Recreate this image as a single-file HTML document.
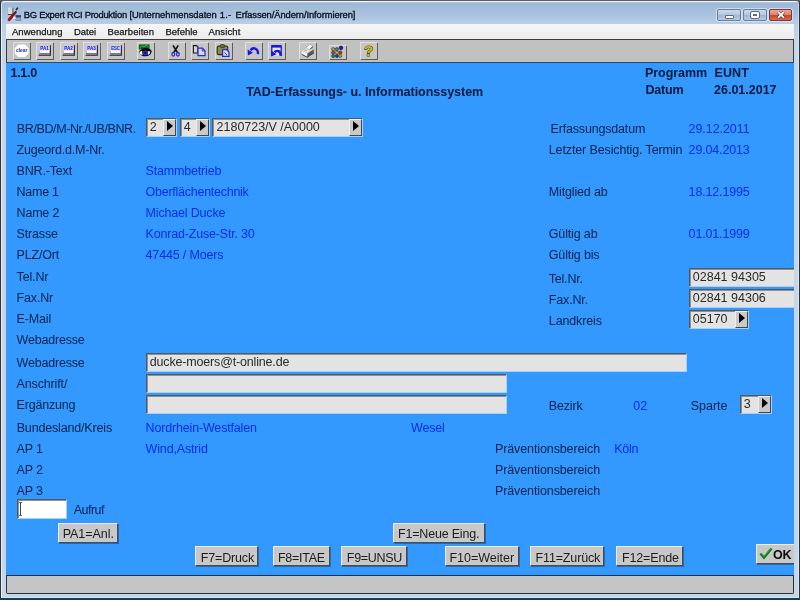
<!DOCTYPE html>
<html><head><meta charset="utf-8"><title>BG Expert RCI Produktion</title>
<style>
html,body{margin:0;padding:0;}
body{width:800px;height:600px;overflow:hidden;position:relative;background:linear-gradient(#555a60 0,#555a60 300px,#0e4450 590px);font-family:"Liberation Sans",sans-serif;}
.t{position:absolute;white-space:nowrap;line-height:normal;}
#frame{position:absolute;left:0;top:0;width:798px;height:597px;border:1px solid #2e3236;border-top-color:#5a5e62;border-bottom-color:#0e4450;border-radius:4px 4px 0 0;box-shadow:inset 1px 1px 0 rgba(255,255,255,.65),inset -1px -1px 0 rgba(255,255,255,.35);background:linear-gradient(#e8f0fa 0,#9db8d8 2px,#a7c0de 12px,#b9cee8 23px,#c4d6ec 40px,#c4d6ec 100%);overflow:hidden;}
#menubar{position:absolute;left:6px;top:24px;width:788px;height:15px;background:linear-gradient(#f6f6f6,#ececec);}
#toolbar{will-change:transform;position:absolute;left:6px;top:39px;width:786px;height:22px;background:#c1c1c1;border:1px solid #3c3c3c;border-bottom-color:#2a4a6a;}
.tb{position:absolute;top:2px;width:17px;height:17px;box-sizing:border-box;margin-left:-7px;background:#c6c6c6;box-shadow:inset 1px 1px 0 #dedede,1px 1px 0 #5e5e5e;}
.tb.s{box-shadow:none;background:none}
.tb.s:before{content:'';position:absolute;left:0;top:2.5px;right:0;bottom:0;background:#c6c6c6;box-shadow:inset 1px 1px 0 #dedede,1px 1px 0 #5e5e5e;}
.tb svg{position:absolute;left:0;top:0;overflow:visible;filter:blur(.4px);}
#main{position:absolute;left:6px;top:63px;width:788px;height:512px;background:#3399ff;overflow:hidden;}
#main>div{position:absolute;left:-6px;top:-63px;width:800px;height:600px;will-change:transform;filter:blur(.45px);}
#top{position:absolute;left:0;top:0;width:800px;height:600px;will-change:transform;filter:blur(.4px);}
#status{position:absolute;left:6px;top:575px;width:786px;height:17px;background:#c5c5c5;border:1px solid #2a3036;border-top-color:#14305c;border-radius:0 0 2px 2px;}
.f.w{background:#fff;}
.f{position:absolute;box-sizing:border-box;background:#e3e3e3;border-top:1px solid #525860;border-left:1px solid #525860;border-right:1px solid #a6d0ff;border-bottom:1px solid #a6d0ff;box-shadow:inset 1px 1px 0 #8e9094;}
.ab{position:absolute;right:0;top:0;bottom:0;width:13px;background:#c9c9c9;border-right:1px solid #444;border-bottom:1px solid #444;border-left:1px solid #eee;border-top:1px solid #eee;box-sizing:border-box;}
.ab i{position:absolute;left:3px;top:1px;width:0;height:0;border-left:6.5px solid #000;border-top:5.5px solid transparent;border-bottom:5.5px solid transparent;}
.b{position:absolute;box-sizing:border-box;background:#c8c8c8;border-top:1px solid #ececec;border-left:1px solid #ececec;border-right:1px solid #4c4c4c;border-bottom:1px solid #4c4c4c;box-shadow:1px 1px 0 rgba(24,56,110,.5);}
.wb{position:absolute;top:9px;height:12px;box-sizing:border-box;border:1px solid #6d7f98;border-radius:2px;box-shadow:0 0 0 1px rgba(255,255,255,.45);}
</style></head>
<body>
<div id="frame"></div>
<!--CHROME-->
<div id="menubar"></div>
<div id="toolbar">
<div class="tb" style="left:13px"><svg width="18" height="18" viewBox="0 0 18 18"><polygon points="5.4,2.4 12,2.4 15.6,6 15.6,11.4 12,15 5.4,15 1.8,11.4 1.8,6" fill="#fff"/>
<text x="8.7" y="10.4" font-size="5.4" font-weight="bold" fill="#1c1ce8" text-anchor="middle" textLength="11.6" lengthAdjust="spacingAndGlyphs">clear</text></svg></div>
<div class="tb" style="left:36.2px"><svg width="18" height="18" viewBox="0 0 18 18"><rect x="2.2" y="2.9" width="12.4" height="10.6" fill="#9c9c9c"/>
<path d="M2.2 13.5 L2.2 2.9 L14.6 2.9" fill="none" stroke="#d6d6d6" stroke-width="1"/>
<path d="M2.6 13.3 L14.4 13.3 L14.4 3.2" fill="none" stroke="#2c2c2c" stroke-width="1.1"/>
<rect x="3.6" y="3.6" width="9.8" height="7.3" fill="#fff"/>
<rect x="3.6" y="3.6" width="9.8" height="4.9" fill="#d0d0fa"/>
<path d="M3.6 10.9 L13.4 10.9 L14 12.6 L3 12.6Z" fill="#7c7c7c"/>
<text x="8.5" y="8.3" font-size="5.4" font-weight="bold" fill="#1414e0" text-anchor="middle" textLength="8.6" lengthAdjust="spacingAndGlyphs">PA1</text></svg></div>
<div class="tb" style="left:59.6px"><svg width="18" height="18" viewBox="0 0 18 18"><rect x="2.2" y="2.9" width="12.4" height="10.6" fill="#9c9c9c"/>
<path d="M2.2 13.5 L2.2 2.9 L14.6 2.9" fill="none" stroke="#d6d6d6" stroke-width="1"/>
<path d="M2.6 13.3 L14.4 13.3 L14.4 3.2" fill="none" stroke="#2c2c2c" stroke-width="1.1"/>
<rect x="3.6" y="3.6" width="9.8" height="7.3" fill="#fff"/>
<rect x="3.6" y="3.6" width="9.8" height="4.9" fill="#d0d0fa"/>
<path d="M3.6 10.9 L13.4 10.9 L14 12.6 L3 12.6Z" fill="#7c7c7c"/>
<text x="8.5" y="8.3" font-size="5.4" font-weight="bold" fill="#1414e0" text-anchor="middle" textLength="8.6" lengthAdjust="spacingAndGlyphs">PA2</text></svg></div>
<div class="tb" style="left:83px"><svg width="18" height="18" viewBox="0 0 18 18"><rect x="2.2" y="2.9" width="12.4" height="10.6" fill="#9c9c9c"/>
<path d="M2.2 13.5 L2.2 2.9 L14.6 2.9" fill="none" stroke="#d6d6d6" stroke-width="1"/>
<path d="M2.6 13.3 L14.4 13.3 L14.4 3.2" fill="none" stroke="#2c2c2c" stroke-width="1.1"/>
<rect x="3.6" y="3.6" width="9.8" height="7.3" fill="#fff"/>
<rect x="3.6" y="3.6" width="9.8" height="4.9" fill="#d0d0fa"/>
<path d="M3.6 10.9 L13.4 10.9 L14 12.6 L3 12.6Z" fill="#7c7c7c"/>
<text x="8.5" y="8.3" font-size="5.4" font-weight="bold" fill="#1414e0" text-anchor="middle" textLength="8.6" lengthAdjust="spacingAndGlyphs">PA3</text></svg></div>
<div class="tb" style="left:106.5px"><svg width="18" height="18" viewBox="0 0 18 18"><rect x="2.2" y="2.9" width="12.4" height="10.6" fill="#9c9c9c"/>
<path d="M2.2 13.5 L2.2 2.9 L14.6 2.9" fill="none" stroke="#d6d6d6" stroke-width="1"/>
<path d="M2.6 13.3 L14.4 13.3 L14.4 3.2" fill="none" stroke="#2c2c2c" stroke-width="1.1"/>
<rect x="3.6" y="3.6" width="9.8" height="7.3" fill="#fff"/>
<rect x="3.6" y="3.6" width="9.8" height="4.9" fill="#d0d0fa"/>
<path d="M3.6 10.9 L13.4 10.9 L14 12.6 L3 12.6Z" fill="#7c7c7c"/>
<text x="8.5" y="8.3" font-size="5.4" font-weight="bold" fill="#1414e0" text-anchor="middle" textLength="8.6" lengthAdjust="spacingAndGlyphs">ESC</text></svg></div>
<div class="tb" style="left:137.3px"><svg width="18" height="18" viewBox="0 0 18 18"><rect x="1.8" y="2.4" width="10.8" height="5" fill="#0c6a1c"/>
<path d="M3.2 5.4 L5 3.8 L7 4.8 L9 3.4 L11.4 4.6" stroke="#58b468" stroke-width=".8" fill="none"/>
<path d="M1.8 10.6 Q4 5.6 9 6 Q13.6 6.2 14.8 9.6 L13.4 12.4 Q9 15.6 4.6 13.4Z" fill="#08080c"/>
<path d="M2.2 10.8 Q3.2 9.2 5 8.8 L5.6 13.2 Q3.4 12.4 2.2 10.8Z" fill="#fff"/>
<path d="M10.6 9 L13.4 9.6 L12.6 12 L10.6 13Z" fill="#e8e8f0"/>
<ellipse cx="8.2" cy="10.9" rx="2.7" ry="2.4" fill="#2030d8"/><circle cx="8.2" cy="10.9" r=".9" fill="#000050"/></svg></div>
<div class="tb" style="left:167.8px"><svg width="18" height="18" viewBox="0 0 18 18"><path d="M5 3.4 L9.2 10.2 M10.2 3.4 L6 10.2" stroke="#14141c" stroke-width="1.7" fill="none"/>
<ellipse cx="5.3" cy="12.3" rx="1.4" ry="1.8" fill="none" stroke="#3a30c8" stroke-width="1.3"/>
<ellipse cx="9.9" cy="12.3" rx="1.4" ry="1.8" fill="none" stroke="#3a30c8" stroke-width="1.3"/></svg></div>
<div class="tb" style="left:190.8px"><svg width="18" height="18" viewBox="0 0 18 18"><path d="M2.4 3.6H5.6L6.8 4.8V11H2.4Z" fill="#d4d4d4" stroke="#1c1c1c" stroke-width="1.1"/>
<path d="M7 6.2H11.4L14 8.8V13.6H7Z" fill="#d8d8f0" stroke="#2a2ad0" stroke-width="1.2"/>
<path d="M11.2 6.4V9H13.8" fill="none" stroke="#2a2ad0" stroke-width=".9"/></svg></div>
<div class="tb" style="left:214.5px"><svg width="18" height="18" viewBox="0 0 18 18"><rect x="2.2" y="4" width="10.6" height="8.6" rx="1.4" fill="#8c8c48" stroke="#2c2c14" stroke-width="1.1"/>
<rect x="5.4" y="2.6" width="4.2" height="2.8" rx=".8" fill="#74743a" stroke="#2c2c14" stroke-width=".8"/>
<path d="M7.6 7.6H11.6L14 10V14.4H7.6Z" fill="#d8d8f4" stroke="#2a2ad0" stroke-width="1.2"/>
<path d="M9.4 10.4 L12 13" stroke="#2a2ad0" stroke-width=".9"/></svg></div>
<div class="tb" style="left:245.3px"><svg width="18" height="18" viewBox="0 0 18 18"><path d="M13 12.2 C13.4 6.4 8.6 4.6 5.4 8.2" fill="none" stroke="#1818dc" stroke-width="2.3"/>
<path d="M2.6 7.4 L2.9 13.4 L8 10.8Z" fill="#1818dc"/></svg></div>
<div class="tb" style="left:268.3px"><svg width="18" height="18" viewBox="0 0 18 18"><rect x="3.2" y="3" width="10.6" height="10.6" fill="#e6e6f2"/>
<rect x="3.2" y="3" width="10.6" height="2.6" fill="#1818dc"/>
<path d="M3.8 5 V14 M13.2 5 V14" stroke="#1818dc" stroke-width="1.3"/>
<path d="M12.6 13.8 C12.8 8.8 8.8 7.8 6.4 10.2" fill="none" stroke="#1818dc" stroke-width="2.5"/>
<path d="M3 8.4 L3.2 14.6 L8.6 12.2Z" fill="#1818dc"/></svg></div>
<div class="tb" style="left:298.8px"><svg width="18" height="18" viewBox="0 0 18 18"><polygon points="2.6,8.8 8.2,4.4 14.6,7.6 8.4,11.6" fill="#e2e2e2" stroke="#9a9a9a" stroke-width=".5"/>
<polygon points="2.6,8.8 8.4,11.6 8.2,15 3,12.6" fill="#f4f4f4"/>
<polygon points="8.4,11.6 14.6,7.6 14.8,10.8 8.2,15" fill="#585858"/>
<path d="M2.8 12.4 L8.2 15.2 L15 10.8" fill="none" stroke="#2e2e2e" stroke-width=".9"/>
<polygon points="7.4,5.8 10.6,2.4 14,4.3 10.6,7.6" fill="#fff" stroke="#8a8a8a" stroke-width=".45"/>
<path d="M10.8 7.4 L14 4.6" stroke="#3a3a3a" stroke-width=".9"/>
<path d="M5.4 7.6 L8 9" stroke="#a8b09c" stroke-width="1.2"/></svg></div>
<div class="tb s" style="left:329.3px"><svg width="18" height="18" viewBox="0 0 18 18">
<circle cx="4.2" cy="7.2" r="1.65" stroke="#2c2c34" stroke-width=".55" fill="#b4a418"/><circle cx="7.9" cy="7.2" r="1.65" stroke="#2c2c34" stroke-width=".55" fill="#2a868c"/><circle cx="12" cy="5.8" r="1.85" stroke="#101030" stroke-width=".55" fill="#1414a8"/>
<circle cx="4.2" cy="10.6" r="1.65" stroke="#2c2c34" stroke-width=".55" fill="#ac2c9c"/><circle cx="7.9" cy="10.6" r="1.65" stroke="#2c2c34" stroke-width=".55" fill="#c4b42c"/><circle cx="11.4" cy="10.4" r="1.65" stroke="#2c2c34" stroke-width=".55" fill="#cc281c"/>
<circle cx="4.2" cy="14" r="1.65" stroke="#2c2c34" stroke-width=".55" fill="#149028"/><circle cx="7.9" cy="14" r="1.65" stroke="#2c2c34" stroke-width=".55" fill="#1c34cc"/><circle cx="11.2" cy="13.8" r="1.65" stroke="#2c2c34" stroke-width=".55" fill="#b4a418"/></svg></div>
<div class="tb" style="left:359.7px"><svg width="18" height="18" viewBox="0 0 18 18"><text x="8.8" y="14.4" font-size="15.5" font-weight="bold" fill="#c8bc1e" stroke="#4c4a12" stroke-width="1.1" text-anchor="middle" paint-order="stroke">?</text></svg></div>
</div>
<div id="main"><div>
<div class="t" style="left:16.80px;top:122.00px;font-size:12.5px;color:#06224e;letter-spacing:-0.390px;">BR/BD/M-Nr./UB/BNR.</div>
<div class="t" style="left:16.60px;top:143.00px;font-size:12.5px;color:#06224e;letter-spacing:-0.199px;">Zugeord.d.M-Nr.</div>
<div class="t" style="left:16.60px;top:164.00px;font-size:12.5px;color:#06224e;letter-spacing:-0.177px;">BNR.-Text</div>
<div class="t" style="left:16.60px;top:185.00px;font-size:12.5px;color:#06224e;letter-spacing:-0.261px;">Name 1</div>
<div class="t" style="left:16.60px;top:206.00px;font-size:12.5px;color:#06224e;letter-spacing:-0.204px;">Name 2</div>
<div class="t" style="left:16.60px;top:227.00px;font-size:12.5px;color:#06224e;letter-spacing:-0.170px;">Strasse</div>
<div class="t" style="left:16.60px;top:248.00px;font-size:12.5px;color:#06224e;letter-spacing:-0.175px;">PLZ/Ort</div>
<div class="t" style="left:16.60px;top:270.00px;font-size:12.5px;color:#06224e;letter-spacing:-0.152px;">Tel.Nr</div>
<div class="t" style="left:16.60px;top:291.00px;font-size:12.5px;color:#06224e;letter-spacing:-0.175px;">Fax.Nr</div>
<div class="t" style="left:16.60px;top:312.00px;font-size:12.5px;color:#06224e;letter-spacing:-0.165px;">E-Mail</div>
<div class="t" style="left:16.60px;top:333.00px;font-size:12.5px;color:#06224e;letter-spacing:-0.196px;">Webadresse</div>
<div class="t" style="left:16.60px;top:356.00px;font-size:12.5px;color:#06224e;letter-spacing:-0.196px;">Webadresse</div>
<div class="t" style="left:16.60px;top:377.00px;font-size:12.5px;color:#06224e;letter-spacing:-0.146px;">Anschrift/</div>
<div class="t" style="left:16.60px;top:398.00px;font-size:12.5px;color:#06224e;letter-spacing:-0.188px;">Ergänzung</div>
<div class="t" style="left:16.70px;top:421.00px;font-size:12.5px;color:#06224e;letter-spacing:-0.169px;">Bundesland/Kreis</div>
<div class="t" style="left:16.60px;top:442.00px;font-size:12.5px;color:#06224e;letter-spacing:-0.188px;">AP 1</div>
<div class="t" style="left:16.60px;top:463.00px;font-size:12.5px;color:#06224e;letter-spacing:-0.188px;">AP 2</div>
<div class="t" style="left:16.60px;top:484.00px;font-size:12.5px;color:#06224e;letter-spacing:-0.188px;">AP 3</div>
<div class="t" style="left:73.70px;top:503.00px;font-size:12.5px;color:#06224e;letter-spacing:-0.507px;">Aufruf</div>
<div class="t" style="left:145.60px;top:164.00px;font-size:12.5px;color:#0a2cf0;letter-spacing:-0.182px;">Stammbetrieb</div>
<div class="t" style="left:145.60px;top:185.00px;font-size:12.5px;color:#0a2cf0;letter-spacing:-0.261px;">Oberflächentechnik</div>
<div class="t" style="left:145.60px;top:206.00px;font-size:12.5px;color:#0a2cf0;letter-spacing:-0.177px;">Michael Ducke</div>
<div class="t" style="left:145.60px;top:227.00px;font-size:12.5px;color:#0a2cf0;letter-spacing:-0.187px;">Konrad-Zuse-Str. 30</div>
<div class="t" style="left:145.60px;top:248.00px;font-size:12.5px;color:#0a2cf0;letter-spacing:-0.172px;">47445 / Moers</div>
<div class="t" style="left:145.60px;top:421.00px;font-size:12.5px;color:#0a2cf0;letter-spacing:-0.169px;">Nordrhein-Westfalen</div>
<div class="t" style="left:145.60px;top:442.00px;font-size:12.5px;color:#0a2cf0;letter-spacing:-0.163px;">Wind,Astrid</div>
<div class="t" style="left:411.00px;top:421.00px;font-size:12.5px;color:#0a2cf0;letter-spacing:-0.193px;">Wesel</div>
<div class="t" style="left:550.60px;top:122.00px;font-size:12.5px;color:#06224e;letter-spacing:-0.182px;">Erfassungsdatum</div>
<div class="t" style="left:548.80px;top:143.00px;font-size:12.5px;color:#06224e;letter-spacing:-0.125px;">Letzter Besichtig. Termin</div>
<div class="t" style="left:548.80px;top:185.00px;font-size:12.5px;color:#06224e;letter-spacing:-0.154px;">Mitglied ab</div>
<div class="t" style="left:548.80px;top:227.00px;font-size:12.5px;color:#06224e;letter-spacing:-0.156px;">Gültig ab</div>
<div class="t" style="left:548.80px;top:248.00px;font-size:12.5px;color:#06224e;letter-spacing:-0.146px;">Gültig bis</div>
<div class="t" style="left:548.80px;top:272.00px;font-size:12.5px;color:#06224e;letter-spacing:-0.217px;">Tel.Nr.</div>
<div class="t" style="left:548.80px;top:293.00px;font-size:12.5px;color:#06224e;letter-spacing:-0.161px;">Fax.Nr.</div>
<div class="t" style="left:548.80px;top:314.00px;font-size:12.5px;color:#06224e;letter-spacing:-0.123px;">Landkreis</div>
<div class="t" style="left:548.80px;top:399.00px;font-size:12.5px;color:#06224e;letter-spacing:-0.162px;">Bezirk</div>
<div class="t" style="left:690.70px;top:399.00px;font-size:12.5px;color:#06224e;letter-spacing:-0.005px;">Sparte</div>
<div class="t" style="left:495.00px;top:442.00px;font-size:12.5px;color:#06224e;letter-spacing:-0.112px;">Präventionsbereich</div>
<div class="t" style="left:495.00px;top:463.00px;font-size:12.5px;color:#06224e;letter-spacing:-0.112px;">Präventionsbereich</div>
<div class="t" style="left:495.00px;top:484.00px;font-size:12.5px;color:#06224e;letter-spacing:-0.112px;">Präventionsbereich</div>
<div class="t" style="left:688.60px;top:122.00px;font-size:12.5px;color:#0a2cf0;letter-spacing:-0.064px;">29.12.2011</div>
<div class="t" style="left:688.60px;top:143.00px;font-size:12.5px;color:#0a2cf0;letter-spacing:-0.156px;">29.04.2013</div>
<div class="t" style="left:688.60px;top:185.00px;font-size:12.5px;color:#0a2cf0;letter-spacing:-0.156px;">18.12.1995</div>
<div class="t" style="left:688.60px;top:227.00px;font-size:12.5px;color:#0a2cf0;letter-spacing:-0.156px;">01.01.1999</div>
<div class="t" style="left:633.30px;top:399.00px;font-size:12.5px;color:#0a2cf0;">02</div>
<div class="t" style="left:614.20px;top:442.00px;font-size:12.5px;color:#0a2cf0;letter-spacing:-0.258px;">Köln</div>
<div class="t" style="left:10.50px;top:66.00px;font-size:12.5px;color:#04183c;font-weight:bold;letter-spacing:-0.299px;">1.1.0</div>
<div class="t" style="left:246.20px;top:85.00px;font-size:12.5px;color:#04183c;font-weight:bold;letter-spacing:-0.027px;">TAD-Erfassungs- u. Informationssystem</div>
<div class="t" style="left:645.00px;top:66.00px;font-size:12.5px;color:#04183c;font-weight:bold;letter-spacing:-0.064px;">Programm</div>
<div class="t" style="left:714.60px;top:66.00px;font-size:12.5px;color:#04183c;font-weight:bold;letter-spacing:0.063px;">EUNT</div>
<div class="t" style="left:645.40px;top:83.00px;font-size:12.5px;color:#04183c;font-weight:bold;letter-spacing:-0.138px;">Datum</div>
<div class="t" style="left:714.00px;top:83.00px;font-size:12.5px;color:#04183c;font-weight:bold;">26.01.2017</div>
<div class="f" style="left:146px;top:118px;width:31px;height:19px"><div class="ab"><i></i></div></div>
<div class="t" style="left:149.80px;top:120.00px;font-size:12.5px;color:#2a2a2a;">2</div>
<div class="f" style="left:180px;top:118px;width:30px;height:19px"><div class="ab"><i></i></div></div>
<div class="t" style="left:183.80px;top:120.00px;font-size:12.5px;color:#2a2a2a;">4</div>
<div class="f" style="left:212px;top:118px;width:151px;height:19px"><div class="ab"><i></i></div></div>
<div class="t" style="left:216.60px;top:120.00px;font-size:12.5px;color:#2a2a2a;letter-spacing:-0.024px;">2180723/V /A0000</div>
<div class="f" style="left:689px;top:268px;width:110px;height:19px"></div>
<div class="t" style="left:692.80px;top:270.00px;font-size:12.5px;color:#2a2a2a;">02841 94305</div>
<div class="f" style="left:689px;top:289px;width:110px;height:19px"></div>
<div class="t" style="left:692.80px;top:291.00px;font-size:12.5px;color:#2a2a2a;">02841 94306</div>
<div class="f" style="left:689px;top:310px;width:60px;height:19px"><div class="ab"><i></i></div></div>
<div class="t" style="left:692.80px;top:312.00px;font-size:12.5px;color:#2a2a2a;">05170</div>
<div class="f" style="left:146px;top:353px;width:541px;height:19px"></div>
<div class="t" style="left:149.80px;top:355.00px;font-size:12.5px;color:#2a2a2a;letter-spacing:-0.169px;">ducke-moers@t-online.de</div>
<div class="f" style="left:146px;top:374px;width:361px;height:19px"></div>
<div class="f" style="left:146px;top:395px;width:361px;height:19px"></div>
<div class="f" style="left:740px;top:395px;width:32px;height:19px"><div class="ab"><i></i></div></div>
<div class="t" style="left:743.80px;top:397.00px;font-size:12.5px;color:#2a2a2a;">3</div>
<div class="f w" style="left:17px;top:499px;width:50px;height:20px"></div>
<div style="position:absolute;left:19.5px;top:502px;width:1.4px;height:14px;background:#444"></div><div style="position:absolute;left:18.5px;top:502px;width:3.4px;height:1px;background:#666"></div><div style="position:absolute;left:18.5px;top:515px;width:3.4px;height:1px;background:#666"></div>
<div class="b" style="left:58px;top:523px;width:60px;height:20px"></div>
<div class="t" style="left:62.70px;top:527.00px;font-size:12.5px;color:#1c1c1c;letter-spacing:-0.033px;">PA1=Anl.</div>
<div class="b" style="left:393px;top:523px;width:92px;height:20px"></div>
<div class="t" style="left:398.00px;top:527.00px;font-size:12.5px;color:#1c1c1c;letter-spacing:-0.196px;">F1=Neue Eing.</div>
<div class="b" style="left:195px;top:546px;width:63px;height:20px"></div>
<div class="t" style="left:200.80px;top:551.00px;font-size:12.5px;color:#1c1c1c;letter-spacing:-0.166px;">F7=Druck</div>
<div class="b" style="left:273px;top:546px;width:57px;height:20px"></div>
<div class="t" style="left:278.00px;top:551.00px;font-size:12.5px;color:#1c1c1c;letter-spacing:-0.281px;">F8=ITAE</div>
<div class="b" style="left:341px;top:546px;width:66px;height:20px"></div>
<div class="t" style="left:346.80px;top:551.00px;font-size:12.5px;color:#1c1c1c;letter-spacing:-0.304px;">F9=UNSU</div>
<div class="b" style="left:444.5px;top:546px;width:74px;height:20px"></div>
<div class="t" style="left:449.40px;top:551.00px;font-size:12.5px;color:#1c1c1c;letter-spacing:0.007px;">F10=Weiter</div>
<div class="b" style="left:530px;top:546px;width:74px;height:20px"></div>
<div class="t" style="left:535.50px;top:551.00px;font-size:12.5px;color:#1c1c1c;letter-spacing:-0.142px;">F11=Zurück</div>
<div class="b" style="left:616px;top:546px;width:67px;height:20px"></div>
<div class="t" style="left:622.00px;top:551.00px;font-size:12.5px;color:#1c1c1c;letter-spacing:-0.156px;">F12=Ende</div>
<div class="b" style="left:756px;top:544px;width:44px;height:20px"></div>
<svg style="position:absolute;left:759px;top:547px" width="14" height="13" viewBox="0 0 14 13"><path d="M1.5 6.5 L5 10.5 L12.5 1.5" fill="none" stroke="#0a7a1a" stroke-width="2.6"/><path d="M2 6 L5 9.4 L12 1.2" fill="none" stroke="#3cc050" stroke-width=".9"/></svg>
<div class="t" style="left:773.00px;top:548.00px;font-size:12.5px;color:#0c0c0c;font-weight:bold;letter-spacing:-0.275px;">OK</div>
</div></div>
<div id="status"></div>
<div id="top">
<div class="t" style="left:23.80px;top:9.00px;font-size:9.4px;color:#0c1420;letter-spacing:-0.266px;-webkit-text-stroke:.35px #0c1420;">BG Expert RCI Produktion</div>
<div class="t" style="left:129.50px;top:9.00px;font-size:9.4px;color:#0c1420;letter-spacing:-0.021px;-webkit-text-stroke:.35px #0c1420;">[Unternehmensdaten</div>
<div class="t" style="left:219.80px;top:9.00px;font-size:9.4px;color:#0c1420;letter-spacing:0.216px;-webkit-text-stroke:.35px #0c1420;">1.-</div>
<div class="t" style="left:235.50px;top:9.00px;font-size:9.4px;color:#0c1420;letter-spacing:-0.094px;-webkit-text-stroke:.35px #0c1420;">Erfassen/Ändern/Informieren]</div>
<div class="t" style="left:12.00px;top:26.00px;font-size:9.5px;color:#141414;letter-spacing:0.036px;-webkit-text-stroke:.25px #141414;">Anwendung</div>
<div class="t" style="left:74.00px;top:26.00px;font-size:9.5px;color:#141414;letter-spacing:-0.034px;-webkit-text-stroke:.25px #141414;">Datei</div>
<div class="t" style="left:107.50px;top:26.00px;font-size:9.5px;color:#141414;letter-spacing:0.056px;-webkit-text-stroke:.25px #141414;">Bearbeiten</div>
<div class="t" style="left:165.50px;top:26.00px;font-size:9.5px;color:#141414;letter-spacing:-0.031px;-webkit-text-stroke:.25px #141414;">Befehle</div>
<div class="t" style="left:208.50px;top:26.00px;font-size:9.5px;color:#141414;letter-spacing:0.121px;-webkit-text-stroke:.25px #141414;">Ansicht</div>
<svg style="position:absolute;left:0;top:0" width="30" height="24" viewBox="0 0 30 24"><rect x="8" y="7.6" width="4.2" height="6.6" fill="#d8d8d2"/><path d="M12.9 7.8 V14.6" stroke="#5c646c" stroke-width="1.1"/><path d="M7.8 14.5 H13.6" stroke="#3c444c" stroke-width="1"/><rect x="15.8" y="15.2" width="5" height="5.2" fill="#9aa69a" stroke="#5a6470" stroke-width=".5"/><rect x="15.8" y="15.2" width="5" height="2.2" fill="#2a3a9c"/><rect x="13.2" y="16.8" width="2.4" height="2.2" fill="#f4f4f4"/><path d="M9.4 19.4 L15.6 12.2" stroke="#7c101c" stroke-width="2.4" stroke-linecap="round"/><path d="M9 19.8 L11.4 17" stroke="#a81420" stroke-width="2.8" stroke-linecap="round"/><path d="M16.4 9.6 L17.4 8.2" stroke="#1c1c58" stroke-width="1.6" stroke-linecap="round"/></svg>
<div class="wb" style="left:717px;width:24px;background:linear-gradient(#c9d9ee 0,#b3c7e2 48%,#9fb7d6 52%,#b7cbe6 100%)"><i style="position:absolute;left:6.5px;top:4.5px;width:7px;height:2px;background:#fff;border:1px solid #5b6c86;border-radius:1px"></i></div>
<div class="wb" style="left:743px;width:24px;background:linear-gradient(#c9d9ee 0,#b3c7e2 48%,#9fb7d6 52%,#b7cbe6 100%)"><i style="position:absolute;left:7px;top:2px;width:4px;height:2px;background:#5b6c86;border:2px solid #fff;outline:1px solid #5b6c86;border-radius:1px"></i></div>
<div class="wb" style="left:768.5px;width:23.5px;border-color:#7a3a3a;background:linear-gradient(#eaa598 0,#dc8272 45%,#c8452c 52%,#d56a4c 100%)"><svg style="position:absolute;left:6px;top:0" width="10" height="10" viewBox="0 0 10 10"><path d="M2.2 2 L7.8 7.6 M7.8 2 L2.2 7.6" stroke="#5a2420" stroke-width="3"/><path d="M2.2 2 L7.8 7.6 M7.8 2 L2.2 7.6" stroke="#fff" stroke-width="1.8"/></svg></div>
</div>
</body></html>
